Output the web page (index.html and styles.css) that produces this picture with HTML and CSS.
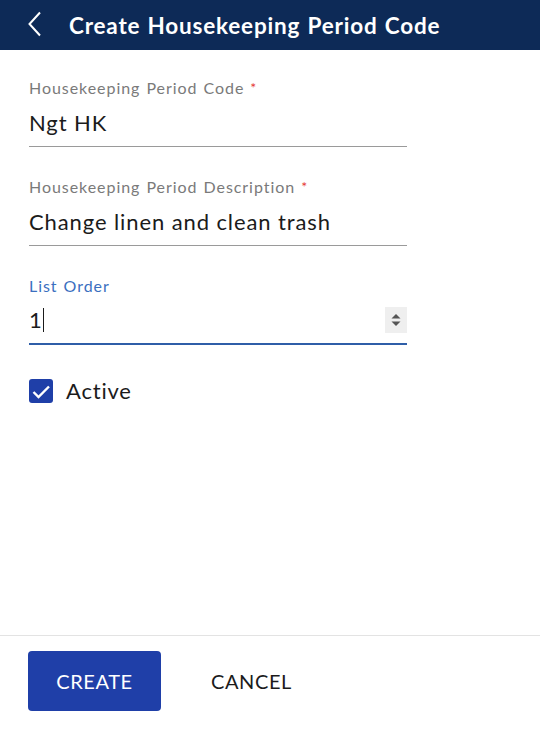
FILE: index.html
```html
<!DOCTYPE html>
<html lang="en">
<head>
<meta charset="utf-8">
<title>Create Housekeeping Period Code</title>
<link rel="stylesheet" href="styles.css">
</head>
<body>
<div class="page">
  <header class="topbar">
    <span class="back" aria-label="Back">
      <svg width="16" height="26" viewBox="0 0 16 26"><path d="M13 1.5 L2.5 13 L13 24.5" fill="none" stroke="#ffffff" stroke-width="2"/></svg>
    </span>
    <h1 class="title">Create Housekeeping Period Code</h1>
  </header>
  <main class="content">
    <div class="field">
      <label class="label">Housekeeping Period Code <span class="req">*</span></label>
      <div class="value">Ngt HK</div>
    </div>
    <div class="field">
      <label class="label">Housekeeping Period Description <span class="req">*</span></label>
      <div class="value">Change linen and clean trash</div>
    </div>
    <div class="field focused">
      <label class="label">List Order</label>
      <div class="value"><span>1</span><span class="caret"></span><span class="spacer"></span>
        <span class="spin">
          <svg width="22" height="26" viewBox="0 0 22 26"><path d="M11 7 L15.5 11.5 L6.5 11.5 Z" fill="#555"/><path d="M11 19 L15.5 14.5 L6.5 14.5 Z" fill="#555"/></svg>
        </span>
      </div>
    </div>
    <div class="check-row">
      <span class="checkbox">
        <svg width="24" height="24" viewBox="0 0 24 24"><path d="M4.5 13 L9.5 18 L20 7.5" fill="none" stroke="#fff" stroke-width="2.4"/></svg>
      </span>
      <span class="check-label">Active</span>
    </div>
  </main>
  <footer class="footer">
    <button class="btn primary">CREATE</button>
    <button class="btn text">CANCEL</button>
  </footer>
</div>
</body>
</html>
```
FILE: styles.css
```css
* { box-sizing: border-box; }
html, body { margin: 0; padding: 0; }
body {
  font-family: Lato, "Open Sans", sans-serif;
  background: #ffffff;
  color: #1b1b1b;
}
.page {
  display: flex;
  flex-direction: column;
  height: 732px;
}
.topbar {
  height: 50px;
  background: #0d2a57;
  display: flex;
  align-items: center;
  padding-left: 27px;
  color: #fff;
}
.back {
  display: flex;
  width: 16px;
  height: 26px;
  margin-top: -2px;
}
.title {
  margin: 0 0 0 26px;
  font-size: 22.5px;
  font-weight: 700;
  letter-spacing: 0.8px;
  word-spacing: 1px;
}
.content {
  flex: 1;
  padding: 28px 0 0 29px;
}
.field {
  width: 378px;
  margin-bottom: 30px;
}
.label {
  display: block;
  font-size: 16px;
  line-height: 20px;
  letter-spacing: 0.95px;
  word-spacing: 1px;
  color: #7a7a7a;
}
.req { color: #e53935; font-size: 14px; vertical-align: top; }
.value {
  display: flex;
  align-items: center;
  height: 49px;
  font-size: 22px;
  letter-spacing: 0.9px;
  border-bottom: 1px solid #9a9a9a;
  color: #1b1b1b;
}
.focused .label { color: #3b6fbf; }
.focused .value {
  border-bottom: 2px solid #2f5ea8;
}
.caret {
  display: inline-block;
  width: 1.5px;
  height: 24px;
  background: #1b1b1b;
}
.spacer { flex: 1; }
.spin {
  display: flex;
  width: 22px;
  height: 26px;
  background: #efefef;
}
.check-row {
  display: flex;
  align-items: center;
  height: 24px;
  gap: 13px;
  margin-top: 34px;
}
.checkbox {
  display: flex;
  width: 24px;
  height: 24px;
  background: #1f3fa8;
  border-radius: 3px;
}
.check-label {
  font-size: 22px;
  letter-spacing: 0.8px;
  line-height: 24px;
}
.footer {
  border-top: 1px solid #e3e3e3;
  padding: 15px 28px 21px;
  display: flex;
  align-items: center;
  gap: 22px;
}
.btn {
  font-family: Lato, "Open Sans", sans-serif;
  font-size: 20px;
  letter-spacing: 0.6px;
  border: none;
  cursor: pointer;
  height: 60px;
  padding: 0;
}
.primary {
  background: #1f3fa8;
  color: #fff;
  border-radius: 4px;
  width: 133px;
}
.text {
  background: transparent;
  color: #1b1b1b;
  padding: 0 28px;
}
```
